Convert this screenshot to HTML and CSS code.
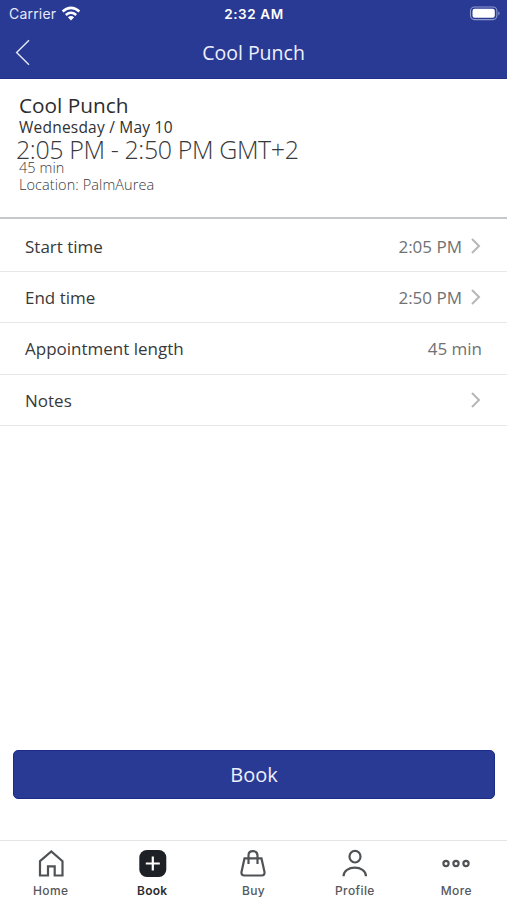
FILE: index.html
```html
<!DOCTYPE html>
<html lang="en">
<head>
<meta charset="utf-8">
<title>Cool Punch</title>
<link rel="stylesheet" href="styles.css">
</head>
<body>
<div class="app">
  <header class="top">
    <div class="status">
      <div class="carrier"><span>Carrier</span>
        <svg width="20" height="16" viewBox="0 0 20 16" fill="none" stroke="#fff" stroke-width="2.6"><path d="M1.6 5.4Q10-1.6 18.4 5.4M4.8 8.9Q10 4.6 15.2 8.9"/><path d="M6.9 11.2Q10 8.6 13.1 11.2L10 14.4Z" fill="#fff" stroke="none"/></svg>
      </div>
      <span class="clock">2:32 AM</span>
      <svg class="battery" width="32" height="16" viewBox="0 0 32 16"><rect x="1.500" y="1" width="26.4" height="12.600" rx="4" fill="none" stroke="#8f99cd" stroke-width="1.1"/><rect x="3.500" y="2.800" width="22.3" height="9" rx="2.2" fill="#fff"/><path d="M29.300 5.300Q32 7.400 29.300 9.500Z" fill="#8f99cd"/></svg>
    </div>
    <div class="nav">
      <svg class="back" width="16" height="28" viewBox="0 0 16 28" fill="none" stroke="#e6e9fa" stroke-width="1.4"><path d="M14 1.2L1.6 13.5L14 25.8"/></svg>
      <h1>Cool Punch</h1>
    </div>
  </header>
  <section class="summary">
    <h2>Cool Punch</h2>
    <p class="date">Wednesday / May 10</p>
    <p class="time">2:05 PM - 2:50 PM GMT+2</p>
    <p class="small">45 min</p>
    <p class="small">Location: PalmAurea</p>
  </section>
  <main class="list">
    <div class="row"><span>Start time</span><span class="value">2:05 PM</span><svg class="chev" width="12" height="18" viewBox="0 0 12 18"><path d="M2 2L9 9L2 16"/></svg></div>
    <div class="row"><span>End time</span><span class="value">2:50 PM</span><svg class="chev" width="12" height="18" viewBox="0 0 12 18"><path d="M2 2L9 9L2 16"/></svg></div>
    <div class="row"><span>Appointment length</span><span class="value">45 min</span></div>
    <div class="row"><span>Notes</span><span class="value"></span><svg class="chev" width="12" height="18" viewBox="0 0 12 18"><path d="M2 2L9 9L2 16"/></svg></div>
  </main>
  <button class="book">Book</button>
  <nav class="tabs">
    <div class="tab"><svg width="30" height="30" viewBox="0 0 30 30"><path d="M4 12.2L15.300 2.400L26.500 12.2V26.500H18.700V17.300H12V26.500H4Z"/></svg><span>Home</span></div>
    <div class="tab active"><svg width="30" height="30" viewBox="0 0 30 30"><rect class="solid" x="2.300" y="1" width="27" height="27" rx="7.500"/><path class="plus" d="M15.800 7.500V21.500M8.800 14.500H22.800"/></svg><span>Book</span></div>
    <div class="tab"><svg width="30" height="30" viewBox="0 0 30 30"><path d="M6.500 9.400H23.500L26.400 22.500Q27.200 26.500 23.500 26.500H6.500Q2.800 26.500 3.600 22.500ZM10.500 15V6.500Q10.500 2.200 15 2.200T19.500 6.500V15"/></svg><span>Buy</span></div>
    <div class="tab"><svg width="30" height="30" viewBox="0 0 30 30"><ellipse cx="15" cy="7.7" rx="5.500" ry="5.800"/><path d="M3.500 27.200C3.500 15.800 26 15.800 26 27.200"/></svg><span>Profile</span></div>
    <div class="tab"><svg width="30" height="30" viewBox="0 0 30 30"><circle cx="5" cy="14.500" r="2.600"/><circle cx="15" cy="14.500" r="2.600"/><circle cx="25" cy="14.500" r="2.600"/></svg><span>More</span></div>
  </nav>
</div>
</body>
</html>
```
FILE: styles.css
```css
* { box-sizing: border-box; }
body, h1, h2, p { margin: 0; font-weight: 400; }
body { font-family: "Open Sans", sans-serif; background: #fff; color: #38393b; }
svg { display: block; flex: none; }
.app { height: 900px; display: flex; flex-direction: column; overflow: hidden; }
.top { height: 79px; background: #293a94; color: #fff; border-bottom: 1px solid #20308a; }
.status { height: 27px; display: grid; grid-template-columns: 1fr auto 1fr; align-items: center; font-family: Inter, sans-serif; font-size: 14px; padding: 0 6px 0 9px; }
.carrier { display: flex; align-items: center; gap: 5px; color: #e6e9fa; letter-spacing: 0.2px; }
.clock { font-weight: 600; font-size: 13.5px; letter-spacing: 0.6px; margin-right: 2px; }
.battery { justify-self: end; }
.nav { height: 51px; display: grid; grid-template-columns: 1fr auto 1fr; align-items: center; padding: 0 15px; }
.nav h1 { grid-column: 2; font-size: 19.5px; line-height: 28px; color: #eef0fc; }
.summary { height: 140px; padding: 14px 19px 0; border-bottom: 2px solid #c5c8ca; white-space: nowrap; }
.summary h2 { font-size: 20.8px; line-height: 25px; margin-bottom: 1px; color: #2c2d2f; }
.date { font-size: 15.5px; line-height: 16px; letter-spacing: 0.22px; color: #303133; }
.time { font-size: 25px; line-height: 28px; font-weight: 300; letter-spacing: -0.4px; margin: 0 0 -4px -3px; }
.small { font-size: 14.5px; line-height: 17px; font-weight: 300; letter-spacing: 0.08px; }
.row { height: 51.3px; display: flex; align-items: center; padding: 0 25px; border-bottom: 1px solid #e6e7e8; font-size: 17px; }
.row:first-child { height: 53px; padding-top: 2px; }
.row:last-child { padding-top: 1px; }
.value { margin-left: auto; color: #707173; }
.chev { margin: -1px 0 0 8px; fill: none; stroke: #b6b7b9; stroke-width: 2; }
.book { margin: auto 12px 41px 13px; height: 49px; border: 1px solid #1b2c86; border-radius: 5px; background: #293a94; color: #eef0fc; font: 400 20px "Open Sans", sans-serif; padding: 0; }
.tabs { height: 60px; border-top: 1px solid #e4e5e6; display: grid; grid-template-columns: repeat(5, 1fr); padding-top: 8px; }
.tab { display: flex; flex-direction: column; align-items: center; font: 500 12px/15px Inter, sans-serif; color: #55585c; letter-spacing: 0.4px; }
.tab svg { fill: none; stroke: #505356; stroke-width: 2.2; }
.tab span { margin-top: 4px; }
.tab .solid { fill: #1d2024; stroke: none; }
.tab .plus { stroke: #fff; }
.active { color: #2b2d30; font-weight: 600; letter-spacing: 0.2px; }
```
